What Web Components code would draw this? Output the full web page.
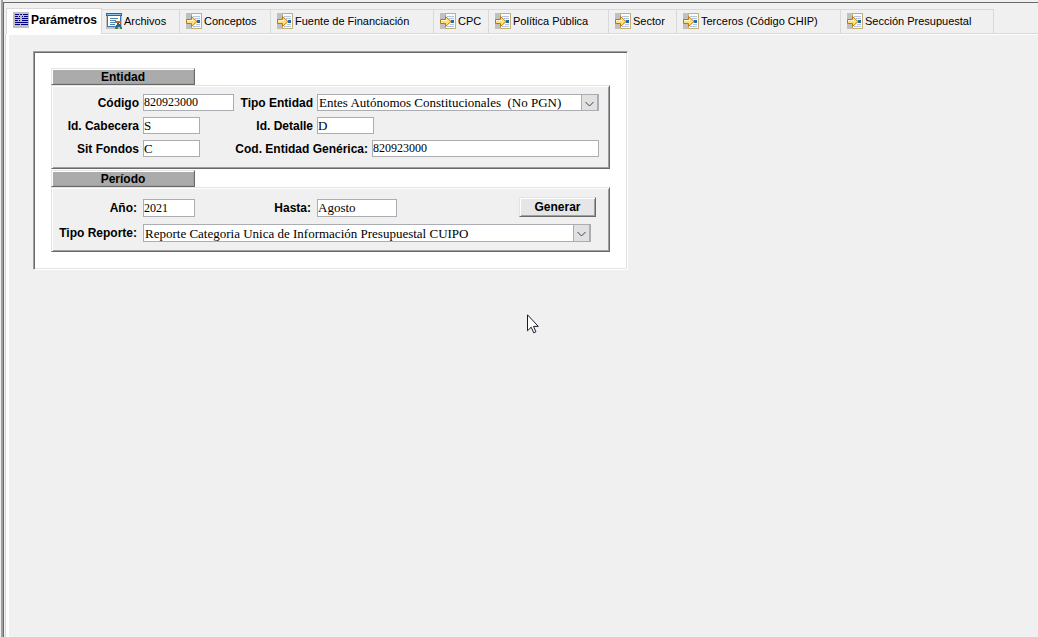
<!DOCTYPE html>
<html lang="es">
<head>
<meta charset="utf-8">
<meta name="viewport" content="width=device-width, initial-scale=1">
<title>Parámetros</title>
<style>
  html, body { height: 100%; }
  body {
    margin: 0;
    background: #f0f0f0;
    color: #000;
    font: 12px/16px "Liberation Sans", Arial, sans-serif;
  }
</style>
</head>
<body>

<app-window>
  <tab-strip slot="tabs">
    <tab-item icon="list" selected style="--tab-width: 96px">Parámetros</tab-item>
    <tab-item icon="file" style="--tab-width: 78px">Archivos</tab-item>
    <tab-item icon="import" style="--tab-width: 91px">Conceptos</tab-item>
    <tab-item icon="import" style="--tab-width: 163px">Fuente de Financiación</tab-item>
    <tab-item icon="import" style="--tab-width: 55px">CPC</tab-item>
    <tab-item icon="import" style="--tab-width: 120px">Política Pública</tab-item>
    <tab-item icon="import" style="--tab-width: 68px">Sector</tab-item>
    <tab-item icon="import" style="--tab-width: 164px">Terceros (Código CHIP)</tab-item>
    <tab-item icon="import" style="--tab-width: 153px">Sección Presupuestal</tab-item>
  </tab-strip>

  <sunken-panel>
    <group-box caption="Entidad">
      <form-row>
        <text-field numeric label="Código" value="820923000" style="--label: 86px; --field: 91px"></text-field>
        <combo-field grow label="Tipo Entidad" value="Entes Autónomos Constitucionales&nbsp; (No PGN)" style="--label: 79px"></combo-field>
      </form-row>
      <form-row>
        <text-field label="Id. Cabecera" value="S" style="--label: 86px; --field: 57px"></text-field>
        <text-field label="Id. Detalle" value="D" style="--label: 113px; --field: 57px"></text-field>
      </form-row>
      <form-row>
        <text-field label="Sit Fondos" value="C" style="--label: 86px; --field: 57px"></text-field>
        <text-field numeric grow label="Cod. Entidad Genérica:" value="820923000" style="--label: 168px"></text-field>
      </form-row>
    </group-box>

    <group-box caption="Período" style="--body-padding: 11px 10px 9px 1px; --row-gap: 7px">
      <form-row>
        <text-field numeric tall label="Año:" value="2021" style="--label: 84px; --field: 52px"></text-field>
        <text-field tall label="Hasta:" value="Agosto" style="--label: 116px; --field: 80px"></text-field>
        <push-button>Generar</push-button>
      </form-row>
      <form-row style="padding-right: 8px">
        <combo-field tall grow label="Tipo Reporte:" value="Reporte Categoria Unica de Información Presupuestal CUIPO" style="--label: 84px"></combo-field>
      </form-row>
    </group-box>
  </sunken-panel>

  <mouse-pointer slot="pointer"></mouse-pointer>
</app-window>

<script>
const icons = {
  list: `<svg width="16" height="16" shape-rendering="crispEdges">
    <rect width="16" height="16" fill="#c0c0c0"/>
    <path stroke="#000080" d="M2 2.500h4m1 0h2m1 0h5M2 4.500h3m1 0h1m2 0h1m1 0h4M2 6.500h5m2 0h6M2 8.500h3m1 0h1m2 0h6M2 10.500h13M2 12.500h5m1 0h7"/>
  </svg>`,
  file: `<svg width="16" height="16" shape-rendering="crispEdges">
    <rect width="16" height="16" fill="#c0c0c0"/>
    <path fill="#fffdf0" stroke="#3b78ad" d="M1.500 1.500h13v12h-13z"/>
    <rect width="16" height="3" fill="#2b659c"/>
    <rect x="1" y="1" width="14" height="1" fill="#8ec4ec"/>
    <path stroke="#4e80ad" d="M4 5.500h8M4 7.500h6M4 9.500h5M4 11.500h5"/>
    <path fill="#b96a35" d="M9 8h6v2H9z"/>
    <path stroke="#315f83" stroke-width="2" fill="none" d="M12 10v2l-2 3M12 11l3 3"/>
    <path stroke="#348b3c" stroke-width="2" d="M9 15h3m2 0h2"/>
  </svg>`,
  import: `<svg width="16" height="16">
    <rect width="16" height="16" fill="#c0c0c0"/>
    <path fill="#f8fbff" stroke="#c5ae72" d="M5.500 .5h10v15h-10z"/>
    <path fill="none" stroke="#b3c3df" d="M7 3.500h7M9 5.500h5M10 11.500h4M7 13.500h7"/>
    <path fill="#2868a0" d="M11 7h3v3h-3z"/>
    <path fill="#ffe070" stroke="#b97818" d="M.5 6.500h5v-3L11 8.500l-5.500 5v-3h-5z"/>
    <path stroke="#fff8cf" d="M1 7.500h6"/>
  </svg>`
};

class AppWindow extends HTMLElement {
  constructor() {
    super();
    this.attachShadow({ mode: 'open' }).innerHTML = `<style>
      :host {
        display: flex;
        box-sizing: border-box;
        min-height: 100%;
        padding-left: 1px;
        background: #f0f0f0;
      }
      .edge { flex: none; width: 2px; background: #a0a0a0; }
      .frame {
        flex: 1;
        min-width: 0;
        display: flex;
        flex-direction: column;
        margin-top: 2px;
        padding: 5px 0 0 1px;
        border: solid #696969;
        border-width: 1px 0 0 1px;
      }
      main {
        flex: 1;
        padding: 16px 24px;
        border: solid #fff;
        border-width: 1px 0 0 3px;
        box-shadow: -1px 0 #d9d9d9;
        margin-left: 1px;
      }
    </style>
    <div class="edge"></div>
    <div class="frame">
      <slot name="tabs"></slot>
      <main><slot></slot></main>
    </div>
    <slot name="pointer"></slot>`;
  }
}

class TabStrip extends HTMLElement {
  constructor() {
    super();
    this.attachShadow({ mode: 'open' }).innerHTML = `<style>
      :host {
        display: flex;
        align-items: flex-end;
        margin-left: 1px;
        background: linear-gradient(#d9d9d9, #d9d9d9) bottom / 100% 1px no-repeat;
      }
    </style>
    <slot></slot>`;
    this.setAttribute('role', 'tablist');
  }
}

class TabItem extends HTMLElement {
  connectedCallback() {
    const selected = this.hasAttribute('selected');
    this.attachShadow({ mode: 'open' }).innerHTML = `<style>
      :host { display: block; flex: 0 1 var(--tab-width); min-width: 0; }
      button {
        display: flex;
        align-items: center;
        gap: 2px;
        box-sizing: border-box;
        width: 100%;
        height: 25px;
        padding: 0 0 2px 6px;
        border: solid #d9d9d9;
        border-width: 1px 1px 1px 0;
        background: #f0f0f0;
        color: #000;
        font: 11px/16px "Liberation Sans", Arial, sans-serif;
        white-space: nowrap;
      }
      svg { flex: none; }
      :host([icon="file"]) button { padding-left: 4px; }
      :host([selected]) button {
        height: 26px;
        padding: 0 0 4px 6px;
        border-width: 1px 1px 0 1px;
        background: #fff;
        font-size: 12px;
        font-weight: bold;
      }
    </style>
    <button type="button" role="tab" aria-selected="${selected}">${icons[this.getAttribute('icon')]}<slot></slot></button>`;
  }
}

class SunkenPanel extends HTMLElement {
  constructor() {
    super();
    this.attachShadow({ mode: 'open' }).innerHTML = `<style>
      :host {
        display: flex;
        flex-direction: column;
        gap: 1px;
        box-sizing: border-box;
        max-width: 595px;
        padding: 16px 17px 17px;
        border: 1px solid;
        border-color: #a0a0a0 #fff #fff #a0a0a0;
        background: #fff;
        box-shadow: inset 1px 1px #696969, inset -1px -1px #e3e3e3;
      }
    </style>
    <slot></slot>`;
  }
}

class GroupBox extends HTMLElement {
  connectedCallback() {
    this.attachShadow({ mode: 'open' }).innerHTML = `<style>
      :host { display: block; }
      h2, section {
        box-sizing: border-box;
        margin: 0;
        border: 1px solid;
        border-color: #e3e3e3 #696969 #696969 #e3e3e3;
        box-shadow: inset 1px 1px #fff, inset -1px -1px #a0a0a0;
      }
      h2 {
        width: 144px;
        height: 17px;
        background: #ababab;
        font: bold 12px/16px "Liberation Sans", Arial, sans-serif;
        text-align: center;
      }
      section {
        display: flex;
        flex-direction: column;
        gap: var(--row-gap, 6px);
        padding: var(--body-padding, 8px 10px 11px 1px);
        background: #f0f0f0;
      }
    </style>
    <h2>${this.getAttribute('caption')}</h2>
    <section><slot></slot></section>`;
  }
}

class FormRow extends HTMLElement {
  constructor() {
    super();
    this.attachShadow({ mode: 'open' }).innerHTML = `<style>
      :host { display: flex; align-items: center; }
    </style>
    <slot></slot>`;
  }
}

// shared by the text and combo fields
const fieldStyle = `
  :host { display: flex; align-items: center; gap: 4px; min-width: 0; }
  :host([tall]) { gap: 6px; }
  :host([grow]) { flex: 1; }
  label {
    flex: none;
    width: var(--label);
    font: bold 12px/16px "Liberation Sans", Arial, sans-serif;
    text-align: right;
    white-space: nowrap;
  }
  .box { width: var(--field); min-width: 0; }
  :host([grow]) .box { flex: 1; }
  input, select {
    box-sizing: border-box;
    width: 100%;
    height: 17px;
    margin: 0;
    border: 1px solid #abadb3;
    border-radius: 0;
    background: #fff;
    color: #000;
    font: 13px/15px "Liberation Serif", "Times New Roman", serif;
  }
  :host([tall]) input, :host([tall]) select { height: 18px; }
  :host([numeric]) input { font-size: 12px; }
`;

class TextField extends HTMLElement {
  connectedCallback() {
    this.attachShadow({ mode: 'open' }).innerHTML = `<style>
      ${fieldStyle}
      input { display: block; padding: 0; }
    </style>
    <label for="field">${this.getAttribute('label')}</label>
    <div class="box"><input id="field" type="text" value="${this.getAttribute('value')}"></div>`;
  }
}

class ComboField extends HTMLElement {
  connectedCallback() {
    this.attachShadow({ mode: 'open' }).innerHTML = `<style>
      ${fieldStyle}
      .box { display: grid; }
      select, .arrow { grid-area: 1 / 1; }
      select { appearance: none; padding: 0 18px 0 1px; }
      .arrow {
        justify-self: end;
        display: flex;
        align-items: center;
        justify-content: center;
        box-sizing: border-box;
        width: 18px;
        padding-top: 2px;
        border: solid #abadb3;
        border-width: 1px 2px 1px 1px;
        background: #e1e1e1;
        pointer-events: none;
      }
    </style>
    <label for="field">${this.getAttribute('label')}</label>
    <div class="box">
      <select id="field"><option>${this.getAttribute('value')}</option></select>
      <span class="arrow"><svg width="9" height="6"><path d="M.5 1l4 4 4-4" fill="none" stroke="#404040"/></svg></span>
    </div>`;
  }
}

class PushButton extends HTMLElement {
  constructor() {
    super();
    this.attachShadow({ mode: 'open' }).innerHTML = `<style>
      :host { display: block; margin: -4px 3px -2px auto; }
      button {
        display: block;
        width: 77px;
        height: 20px;
        padding: 0;
        border: 1px solid;
        border-color: #e3e3e3 #696969 #696969 #e3e3e3;
        background: #e6e6e6;
        color: #000;
        box-shadow: inset 1px 1px #fff, inset -1px -1px #a0a0a0;
        font: bold 12px/16px "Liberation Sans", Arial, sans-serif;
      }
    </style>
    <button type="button"><slot></slot></button>`;
  }
}

class MousePointer extends HTMLElement {
  constructor() {
    super();
    this.attachShadow({ mode: 'open' }).innerHTML = `<style>
      :host { position: absolute; left: 527px; top: 314px; pointer-events: none; }
      svg { display: block; }
    </style>
    <svg width="12" height="20"><path d="M.5 .8v16l3.700-3.600 2.500 5.600 2.200-1-2.400-5.400h4.800z" fill="#fff" stroke="#1c1c28"/></svg>`;
  }
}

customElements.define('app-window', AppWindow);
customElements.define('tab-strip', TabStrip);
customElements.define('tab-item', TabItem);
customElements.define('sunken-panel', SunkenPanel);
customElements.define('group-box', GroupBox);
customElements.define('form-row', FormRow);
customElements.define('text-field', TextField);
customElements.define('combo-field', ComboField);
customElements.define('push-button', PushButton);
customElements.define('mouse-pointer', MousePointer);
</script>
</body>
</html>
